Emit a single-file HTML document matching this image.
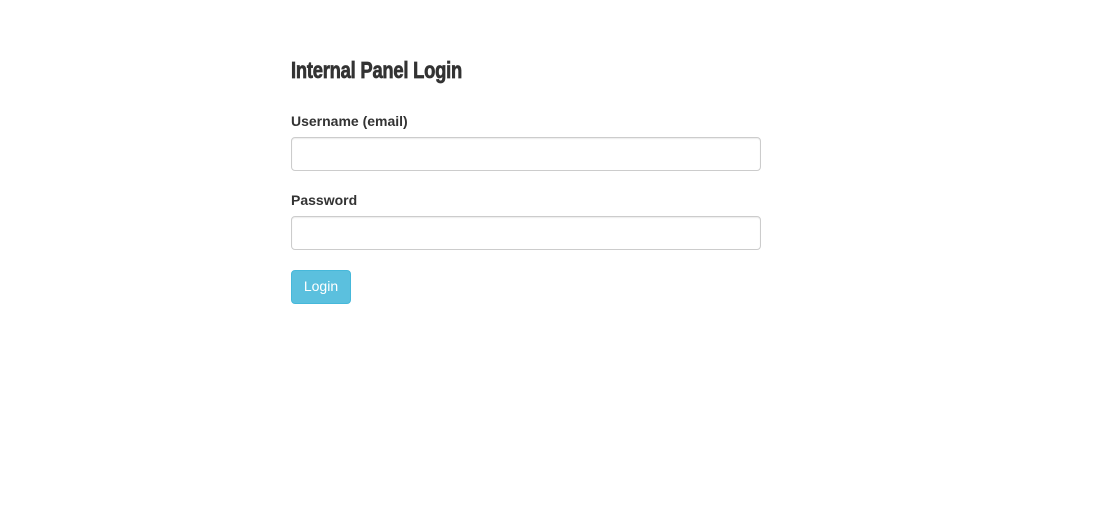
<!DOCTYPE html>
<html><head><style>
body{margin:0;background:#fff;font-family:"Liberation Sans",sans-serif;color:#333;width:1115px;height:532px;overflow:hidden;position:relative}
h1{position:absolute;left:291px;top:57px;margin:0;font-size:23px;font-weight:bold;letter-spacing:-0.3px;transform:scaleX(0.8);transform-origin:left;white-space:nowrap;font-family:"Liberation Sans Narrow","Liberation Sans",sans-serif;-webkit-text-stroke:0.7px #333}
.l{position:absolute;left:291px;font-size:14px;font-weight:bold}
.i{position:absolute;left:291px;width:468px;height:32px;border:1px solid #ccc;border-radius:4px;box-shadow:inset 0 1px 1px rgba(0,0,0,.075)}
.b{position:absolute;left:291px;top:270px;width:60px;height:34px;box-sizing:border-box;background:#5bc0de;border:1px solid #46b8da;border-radius:4px;color:#fff;font-size:14px;text-align:center;line-height:31px}
</style></head><body>
<h1>Internal Panel Login</h1>
<div class="l" style="top:113px">Username (email)</div>
<div class="i" style="top:137px"></div>
<div class="l" style="top:192px">Password</div>
<div class="i" style="top:216px"></div>
<div class="b">Login</div>
</body></html>
